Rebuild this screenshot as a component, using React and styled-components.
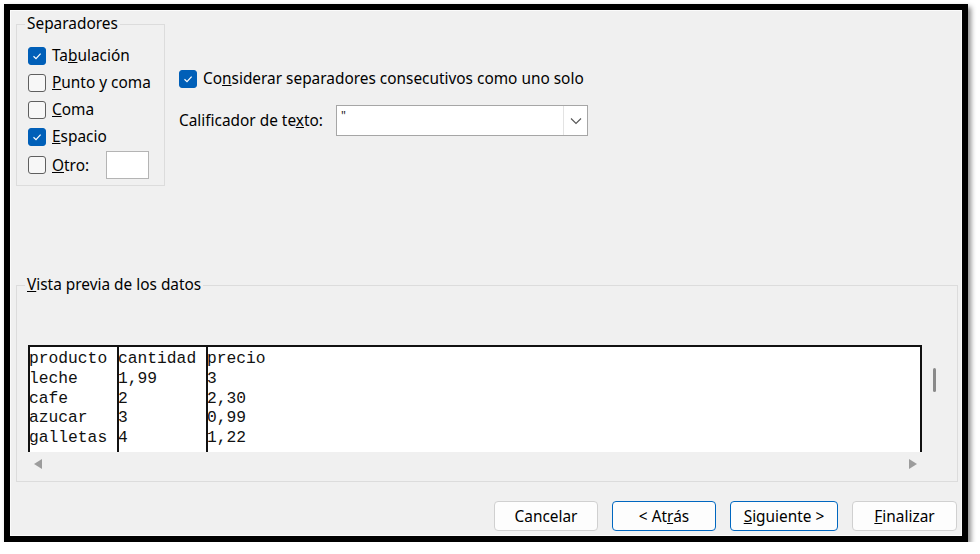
import React from "react";
import styled, { createGlobalStyle } from "styled-components";

const GlobalStyle = createGlobalStyle`
  body {
    margin: 0;
    background: #ffffff;
    font-family: "Noto Sans", "Open Sans", sans-serif;
  }
`;

const rows = [
  ["producto", "cantidad", "precio"],
  ["leche", "1,99", "3"],
  ["cafe", "2", "2,30"],
  ["azucar", "3", "0,99"],
  ["galletas", "4", "1,22"],
];

const Check = ({ checked }) => (
  <CheckBox $checked={checked}>
    {checked && (
      <svg width="12" height="12" viewBox="0 0 12 12">
        <path d="M2.5 6.3 L5 8.6 L9.6 3.6" fill="none" stroke="#fff" strokeWidth="1.2" />
      </svg>
    )}
  </CheckBox>
);

// label with one mnemonic letter underlined
const Mn = ({ before = "", letter, after = "" }) => (
  <span>
    {before}
    <u>{letter}</u>
    {after}
  </span>
);

export default function App() {
  return (
    <>
      <GlobalStyle />
      <Window>
        <TopRow>
          <GroupBox>
            <Legend>Separadores</Legend>
            <Option>
              <Check checked />
              <Mn before="Ta" letter="b" after="ulación" />
            </Option>
            <Option>
              <Check />
              <Mn letter="P" after="unto y coma" />
            </Option>
            <Option>
              <Check />
              <Mn letter="C" after="oma" />
            </Option>
            <Option>
              <Check checked />
              <Mn letter="E" after="spacio" />
            </Option>
            <Option $tall>
              <Check />
              <Mn letter="O" after="tro:" />
              <OtherInput />
            </Option>
          </GroupBox>

          <RightColumn>
            <Option>
              <Check checked />
              <Mn before="Co" letter="n" after="siderar separadores consecutivos como uno solo" />
            </Option>
            <QualifierRow>
              <FieldLabel>
                <Mn before="Calificador de te" letter="x" after="to:" />
              </FieldLabel>
              <Combo>
                <ComboValue>"</ComboValue>
                <ComboButton>
                  <svg width="12" height="8" viewBox="0 0 12 8">
                    <path d="M1 1.5 L6 6.5 L11 1.5" fill="none" stroke="#555" strokeWidth="1.1" />
                  </svg>
                </ComboButton>
              </Combo>
            </QualifierRow>
          </RightColumn>
        </TopRow>

        <PreviewBox>
          <Legend>
            <Mn letter="V" after="ista previa de los datos" />
          </Legend>
          <PreviewGrid>
            <DataTable>
              {[0, 1, 2].map((c) => (
                <DataColumn key={c}>
                  {rows.map((r, i) => (
                    <Cell key={i}>{r[c]}</Cell>
                  ))}
                </DataColumn>
              ))}
            </DataTable>
            <VScroll>
              <Thumb />
            </VScroll>
            <HScroll>
              <Arrow $dir="left" />
              <Arrow $dir="right" />
            </HScroll>
          </PreviewGrid>
        </PreviewBox>

        <ButtonRow>
          <Button $w={104}>Cancelar</Button>
          <Button $w={104} $primary>
            <Mn before="< At" letter="r" after="ás" />
          </Button>
          <Button $w={108} $primary>
            <Mn letter="S" after="iguiente >" />
          </Button>
          <Button $w={105}>
            <Mn letter="F" after="inalizar" />
          </Button>
        </ButtonRow>
      </Window>
    </>
  );
}

const Window = styled.div`
  box-sizing: border-box;
  margin: 4px 0 0 4px;
  width: 964px;
  height: 538px;
  border: 6px solid #000;
  background: #f0f0f0;
  box-shadow: inset 0 0 0 1px #fbfbfb, 3px 3px 5px rgba(0, 0, 0, 0.45);
  padding: 3px 5px 5px 6px;
  display: flex;
  flex-direction: column;
  font-size: 15.4px;
  color: #000;

  u {
    text-decoration-thickness: 1px;
    text-underline-offset: 1px;
  }
`;

const TopRow = styled.div`
  display: flex;
  align-items: flex-start;
`;

const GroupBox = styled.fieldset`
  box-sizing: border-box;
  width: 149px;
  margin: 0;
  padding: 7px 0 5px 11px;
  border: 1px solid #dcdcdc;
  display: flex;
  flex-direction: column;
`;

const Legend = styled.legend`
  padding: 0 2px;
  margin-left: -3px;
  line-height: 22px;
  font-size: 15.4px;
`;

const Option = styled.label`
  display: flex;
  align-items: center;
  gap: 6px;
  height: ${(p) => (p.$tall ? 30 : 27)}px;
  white-space: nowrap;
`;

const CheckBox = styled.span`
  box-sizing: border-box;
  width: 18px;
  height: 18px;
  flex: none;
  border-radius: 3px;
  display: flex;
  align-items: center;
  justify-content: center;
  background: ${(p) => (p.$checked ? "#005fb8" : "#f7f7f7")};
  border: 1px solid ${(p) => (p.$checked ? "#005fb8" : "#5f5f5f")};
`;

const OtherInput = styled.span`
  box-sizing: border-box;
  width: 43px;
  height: 28px;
  margin-left: 11px;
  background: #fff;
  border: 1px solid #b4b4b4;
`;

const RightColumn = styled.div`
  margin-left: 14px;
  padding-top: 52px;
  display: flex;
  flex-direction: column;
`;

const QualifierRow = styled.div`
  display: flex;
  align-items: center;
  margin-top: 13px;
`;

const FieldLabel = styled.span`
  width: 157px;
  white-space: nowrap;
`;

const Combo = styled.div`
  box-sizing: border-box;
  width: 252px;
  height: 31px;
  background: #fff;
  border: 1px solid #a6a6a6;
  display: flex;
`;

const ComboValue = styled.span`
  flex: 1;
  padding: 3px 0 0 4px;
  font-size: 12px;
  line-height: 14px;
  color: #222;
`;

const ComboButton = styled.span`
  width: 23px;
  border-left: 1px solid #e3e3e3;
  display: flex;
  align-items: center;
  justify-content: center;
`;

const PreviewBox = styled.fieldset`
  box-sizing: border-box;
  margin: 88px 0 0 0;
  width: 942px;
  height: 208px;
  padding: 49px 0 0 11px;
  border: 1px solid #dcdcdc;
`;

const PreviewGrid = styled.div`
  display: grid;
  grid-template-columns: 894px 1fr;
  grid-template-rows: 107px 24px;
`;

const DataTable = styled.div`
  box-sizing: border-box;
  background: #fff;
  border-top: 2px solid #111;
  border-right: 2px solid #111;
  display: grid;
  grid-template-columns: 89px 89px 1fr;
  padding-top: 2px;
`;

const DataColumn = styled.div`
  border-left: 2px solid #111;
  margin-top: -2px;
  padding-top: 2px;
`;

const Cell = styled.div`
  font-family: "Liberation Mono", "Courier New", monospace;
  font-size: 16.3px;
  line-height: 19.75px;
  margin-left: -1px;
  color: #111;
  white-space: pre;
`;

const VScroll = styled.div`
  display: flex;
  justify-content: center;
  padding: 23px 10px 0 0;
`;

const Thumb = styled.div`
  width: 3px;
  height: 24px;
  border-radius: 2px;
  background: #8a8a8a;
`;

const HScroll = styled.div`
  grid-column: 1;
  display: flex;
  justify-content: space-between;
  align-items: center;
  padding: 0 5px 0 6px;
`;

const Arrow = styled.span`
  width: 0;
  height: 0;
  border-top: 5px solid transparent;
  border-bottom: 5px solid transparent;
  ${(p) =>
    p.$dir === "left"
      ? "border-right: 8px solid #9c9c9c;"
      : "border-left: 8px solid #9c9c9c;"}
`;

const ButtonRow = styled.div`
  margin-top: auto;
  display: flex;
  justify-content: flex-end;
  gap: 14px;
`;

const Button = styled.button`
  box-sizing: border-box;
  width: ${(p) => p.$w}px;
  height: 30px;
  border-radius: 4px;
  background: #fdfdfd;
  border: 1px solid ${(p) => (p.$primary ? "#0067c0" : "#d0d0d0")};
  font-family: "Noto Sans", "Open Sans", sans-serif;
  font-size: 15.4px;
  color: #000;
  padding: 0;
`;
